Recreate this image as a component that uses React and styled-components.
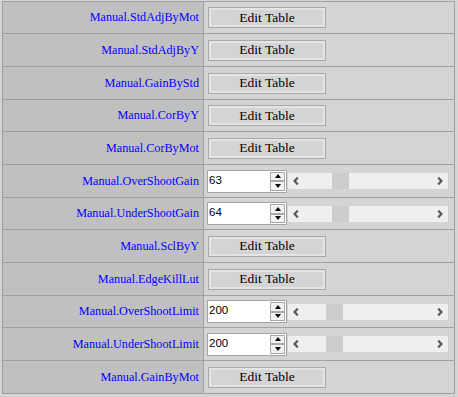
import React from "react";
import styled, { createGlobalStyle } from "styled-components";

const GlobalStyle = createGlobalStyle`
  body {
    margin: 0;
    background: #d4d4d4;
  }
`;

const rows = [
  { label: "Manual.StdAdjByMot", type: "table" },
  { label: "Manual.StdAdjByY", type: "table" },
  { label: "Manual.GainByStd", type: "table" },
  { label: "Manual.CorByY", type: "table" },
  { label: "Manual.CorByMot", type: "table" },
  { label: "Manual.OverShootGain", type: "slider", value: 63, max: 250 },
  { label: "Manual.UnderShootGain", type: "slider", value: 64, max: 250 },
  { label: "Manual.SclByY", type: "table" },
  { label: "Manual.EdgeKillLut", type: "table" },
  { label: "Manual.OverShootLimit", type: "slider", value: 200, max: 1000 },
  { label: "Manual.UnderShootLimit", type: "slider", value: 200, max: 1000 },
  { label: "Manual.GainByMot", type: "table" },
];

const Chevron = ({ dir }) => (
  <svg width="6" height="8" viewBox="0 0 6 8">
    <polyline
      points={dir === "left" ? "4.8,0.6 1.6,4 4.8,7.4" : "1.2,0.6 4.4,4 1.2,7.4"}
      fill="none"
      stroke="#575757"
      strokeWidth="2.2"
    />
  </svg>
);

const TRACK = 128 - 17;

const App = () => {
  return (
    <>
      <GlobalStyle />
      <Table>
        {rows.map((r) => (
          <Row key={r.label}>
            <Label>{r.label}</Label>
            <Value>
              {r.type === "table" ? (
                <EditButton>Edit Table</EditButton>
              ) : (
                <>
                  <NumberBox>
                    <NumberText>{r.value}</NumberText>
                    <Spinner>
                      <SpinBtn>
                        <Tri up />
                      </SpinBtn>
                      <SpinBtn>
                        <Tri />
                      </SpinBtn>
                    </Spinner>
                  </NumberBox>
                  <ScrollBar>
                    <Arrow>
                      <Chevron dir="left" />
                    </Arrow>
                    <Track>
                      <Thumb style={{ marginLeft: Math.round((r.value / r.max) * TRACK) }} />
                    </Track>
                    <Arrow>
                      <Chevron dir="right" />
                    </Arrow>
                  </ScrollBar>
                </>
              )}
            </Value>
          </Row>
        ))}
      </Table>
    </>
  );
};

export default App;

const Table = styled.div`
  display: flex;
  flex-direction: column;
  width: 453px;
  box-sizing: border-box;
  margin: 1px 0 0 2px;
  border: 1px solid #a0a0a0;
  border-bottom: none;
`;

const Row = styled.div`
  display: grid;
  grid-template-columns: 201px 1fr;
  height: 33px;
  box-sizing: border-box;
  border-bottom: 1px solid #a0a0a0;

  &:nth-child(3n + 1) {
    height: 32px;
  }
`;

const Label = styled.div`
  display: flex;
  align-items: center;
  justify-content: flex-end;
  padding-right: 4px;
  background: #c0c0c0;
  border-right: 1px solid #a0a0a0;
  color: #0000ff;
  font-family: "Liberation Serif", "Times New Roman", serif;
  font-size: 12.2px;
  white-space: nowrap;
`;

const Value = styled.div`
  display: flex;
  align-items: center;
  padding-left: 3px;
`;

const EditButton = styled.button`
  width: 118px;
  height: 21px;
  margin-left: 1px;
  padding: 0;
  box-sizing: border-box;
  border: 1px solid #a8a8a8;
  box-shadow: inset 0 0 0 2px #e4e4e4;
  background: #d4d4d4;
  color: #000;
  font-family: "Liberation Serif", "Times New Roman", serif;
  font-size: 13.5px;
  cursor: pointer;
`;

const NumberBox = styled.div`
  display: flex;
  justify-content: space-between;
  width: 80px;
  height: 23px;
  box-sizing: border-box;
  border: 1px solid #a4a4a4;
  background: #fff;
`;

const NumberText = styled.span`
  padding: 3px 0 0 1px;
  font-family: "Liberation Sans", Arial, sans-serif;
  font-size: 11.5px;
  color: #000;
`;

const Spinner = styled.div`
  display: flex;
  flex-direction: column;
  padding: 1px 1px 1px 0;
`;

const SpinBtn = styled.div`
  display: flex;
  align-items: center;
  justify-content: center;
  width: 15px;
  height: 10px;
  box-sizing: border-box;
  border: 1px solid #a8a8a8;
  background: #f2f2f2;
`;

const Tri = styled.div`
  width: 0;
  height: 0;
  border-left: 3.5px solid transparent;
  border-right: 3.5px solid transparent;
  ${(p) => (p.up ? "border-bottom: 4px solid #000;" : "border-top: 4px solid #000;")}
`;

const ScrollBar = styled.div`
  display: flex;
  width: 160px;
  height: 16px;
  margin-left: 1px;
  background: #efefef;
`;

const Arrow = styled.div`
  display: flex;
  align-items: center;
  justify-content: center;
  width: 16px;
  height: 16px;
`;

const Track = styled.div`
  flex: 1;
  display: flex;
`;

const Thumb = styled.div`
  width: 17px;
  height: 16px;
  background: #cdcdcd;
`;
